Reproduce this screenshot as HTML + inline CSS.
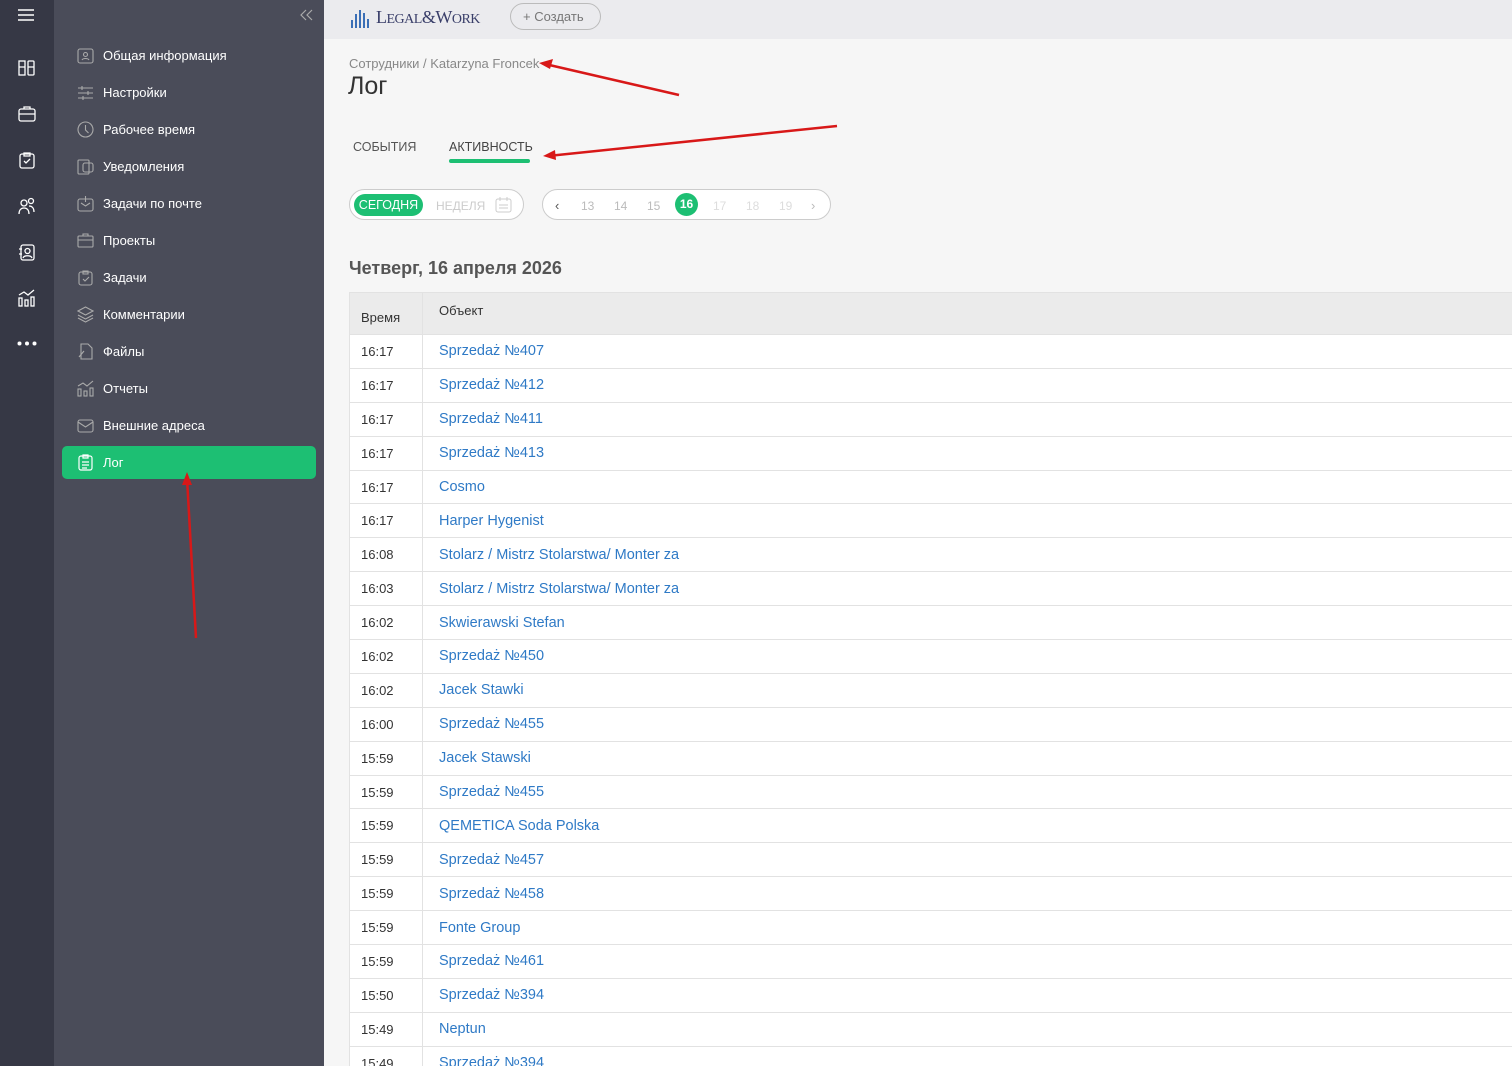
<!DOCTYPE html>
<html><head><meta charset="utf-8"><style>
*{box-sizing:border-box;margin:0;padding:0}
html,body{width:1512px;height:1066px;overflow:hidden}
body{font-family:"Liberation Sans","Noto Sans CJK SC",sans-serif;background:#f6f6f6;position:relative}
.rail{position:absolute;left:0;top:0;width:54px;height:1066px;background:#363845}
.side{position:absolute;left:54px;top:0;width:270px;height:1066px;background:#4a4c59}
.top{position:absolute;left:324px;top:0;right:0;height:39px;background:#ebebee}
.ri{position:absolute;left:17px;width:20px;height:20px}
.item{position:absolute;left:62px;width:254px;height:33px;color:#fff;font-size:13px;display:flex;align-items:center;padding-left:41px}
.item svg{position:absolute;left:15px;top:8px}
.item.act{background:#1dbf73;border-radius:5px}
table{position:absolute;left:349px;top:292px;width:1170px;border-collapse:collapse;background:#fff;font-size:13px}
td,th{border:1px solid #e2e2e2;height:33.9px;text-align:left;font-weight:normal}
th{background:#ebebeb;height:42px;color:#333;font-size:13px}
td:first-child,th:first-child{width:73px;padding-left:11px;color:#333}
th:first-child{padding-top:8px}
td:nth-child(2),th:nth-child(2){padding-left:16px}
td:nth-child(2){color:#2f7ac6;font-size:14.5px}
th:nth-child(2){padding-bottom:6px}
</style></head><body>
<div class="rail">
<svg style="position:absolute;left:18px;top:9px" width="16" height="12"><path d="M0 1h16M0 6h16M0 11h16" stroke="#fff" stroke-width="1.4"/></svg>
<svg class="ri" style="top:58px" viewBox="0 0 20 20" fill="none" stroke="#fff" stroke-width="1.3"><rect x="2" y="3" width="6" height="14"/><rect x="11" y="3" width="6" height="14" rx="1"/><path d="M2 9h6M11 9h6"/></svg>
<svg class="ri" style="top:104px" viewBox="0 0 20 20" fill="none" stroke="#fff" stroke-width="1.3"><rect x="2" y="5" width="16" height="12" rx="2"/><path d="M2 10h16M7 5V3h6v2"/></svg>
<svg class="ri" style="top:150px" viewBox="0 0 20 20" fill="none" stroke="#fff" stroke-width="1.3"><rect x="3" y="4" width="14" height="14" rx="2"/><path d="M7 3h6v3H7zM7 11l2 2 4-4"/></svg>
<svg class="ri" style="top:196px" viewBox="0 0 20 20" fill="none" stroke="#fff" stroke-width="1.3"><circle cx="7" cy="7" r="3"/><circle cx="14" cy="5" r="2.5"/><path d="M2 18c0-4 2-6 5-6s5 2 5 6M12 10c3 0 5 2 5 6"/></svg>
<svg class="ri" style="top:242px" viewBox="0 0 20 20" fill="none" stroke="#fff" stroke-width="1.3"><rect x="4" y="3" width="13" height="15" rx="2"/><circle cx="10.5" cy="9" r="2.5"/><path d="M6 16c1-3 8-3 9 0M2 7h3M2 12h3"/></svg>
<svg class="ri" style="top:288px" viewBox="0 0 20 20" fill="none" stroke="#fff" stroke-width="1.3"><rect x="2" y="10" width="3" height="8"/><rect x="8" y="12" width="3" height="6"/><rect x="14" y="9" width="3" height="9"/><path d="M2 7l5-3 4 3 6-5"/></svg>
<svg style="position:absolute;left:17px;top:341px" width="20" height="5"><circle cx="2.5" cy="2.5" r="2" fill="#fff"/><circle cx="10" cy="2.5" r="2" fill="#fff"/><circle cx="17.5" cy="2.5" r="2" fill="#fff"/></svg>
</div>
<div class="side">
<svg style="position:absolute;left:246px;top:9px" width="14" height="12" fill="none" stroke="#aaa" stroke-width="1.2"><path d="M6 1L1 6l5 5M12 1L7 6l5 5"/></svg>
</div>
<div class="item" style="top:39px"><svg width="17" height="17" fill="none" stroke="#aaa" stroke-width="1.1"><rect x="1" y="2" width="15" height="14" rx="2"/><circle cx="8.5" cy="7.5" r="2"/><path d="M5 13c1-2 6-2 7 0"/></svg>Общая информация</div>
<div class="item" style="top:76px"><svg width="17" height="17" fill="none" stroke="#aaa" stroke-width="1.1"><path d="M1 4h15M1 9h15M1 14h15M5 2v4M11 7v4M6 12v4"/></svg>Настройки</div>
<div class="item" style="top:113px"><svg width="17" height="17" fill="none" stroke="#aaa" stroke-width="1.1"><circle cx="8.5" cy="8.5" r="7.5"/><path d="M8.5 4v5l3 3"/></svg>Рабочее время</div>
<div class="item" style="top:150px"><svg width="17" height="17" fill="none" stroke="#aaa" stroke-width="1.1"><rect x="1" y="2" width="11" height="14" rx="1"/><rect x="6" y="5" width="10" height="9" rx="2"/></svg>Уведомления</div>
<div class="item" style="top:187px"><svg width="17" height="17" fill="none" stroke="#aaa" stroke-width="1.1"><rect x="1" y="4" width="15" height="12" rx="2"/><path d="M4 8l4.5 3L13 8M8.5 1v6"/></svg>Задачи по почте</div>
<div class="item" style="top:224px"><svg width="17" height="17" fill="none" stroke="#aaa" stroke-width="1.1"><rect x="1" y="4" width="15" height="11" rx="1"/><path d="M1 8h15M6 4V2h5v2"/></svg>Проекты</div>
<div class="item" style="top:261px"><svg width="17" height="17" fill="none" stroke="#aaa" stroke-width="1.1"><rect x="2" y="3" width="13" height="13" rx="2"/><path d="M6 2h5v3H6zM6 10l2 2 4-4"/></svg>Задачи</div>
<div class="item" style="top:298px"><svg width="17" height="17" fill="none" stroke="#aaa" stroke-width="1.1"><path d="M8.5 1L16 5l-7.5 4L1 5zM1 9l7.5 4L16 9M1 12l7.5 4 7.5-4"/></svg>Комментарии</div>
<div class="item" style="top:335px"><svg width="17" height="17" fill="none" stroke="#aaa" stroke-width="1.1"><path d="M4 1h7l4 4v11H4z"/><path d="M2 14l5-6"/></svg>Файлы</div>
<div class="item" style="top:372px"><svg width="17" height="17" fill="none" stroke="#aaa" stroke-width="1.1"><rect x="1" y="9" width="3" height="7"/><rect x="7" y="11" width="3" height="5"/><rect x="13" y="8" width="3" height="8"/><path d="M1 6l5-3 4 3 6-5"/></svg>Отчеты</div>
<div class="item" style="top:409px"><svg width="17" height="17" fill="none" stroke="#aaa" stroke-width="1.1"><rect x="1" y="3" width="15" height="12" rx="2"/><path d="M1 5l7.5 5L16 5"/></svg>Внешние адреса</div>
<div class="item act" style="top:446px"><svg width="17" height="17" fill="none" stroke="#fff" stroke-width="1.2"><rect x="2" y="2" width="13" height="14" rx="2"/><path d="M6 1h5v3H6zM5 8h7M5 11h7M5 14h5"/></svg>Лог</div>
<div class="top">
<div style="position:absolute;left:26px;top:6px;display:flex;align-items:flex-end;height:22px">
<svg width="26" height="20"><g stroke="#3b6fb6" stroke-width="2"><path d="M2 20v-8M6 20V6M10 20V2M14 20V5M18 20v-9"/></g></svg>
<span style="font-family:'Liberation Serif',serif;font-size:18px;color:#3a3f6a;letter-spacing:-0.5px">L<span style="font-size:14px">EGAL</span>&amp;W<span style="font-size:14px">ORK</span></span></div>
<div style="position:absolute;left:186px;top:3px;width:91px;height:27px;border:1px solid #bbb;border-radius:14px;font-size:13px;color:#777;line-height:25px;padding-left:12px">+ Создать</div>
</div>
<div style="position:absolute;left:349px;top:56px;font-size:13px;color:#888">Сотрудники / Katarzyna Froncek</div>
<div style="position:absolute;left:348px;top:72px;font-size:25px;color:#333">Лог</div>
<div style="position:absolute;left:353px;top:140px;font-size:12.5px;color:#555">СОБЫТИЯ</div>
<div style="position:absolute;left:449px;top:140px;font-size:12.5px;color:#444">АКТИВНОСТЬ</div>
<div style="position:absolute;left:449px;top:159px;width:81px;height:4px;background:#1dbf73;border-radius:2px"></div>
<div style="position:absolute;left:349px;top:189px;width:175px;height:31px;border:1px solid #ccc;border-radius:16px;background:#fff"></div>
<div style="position:absolute;left:354px;top:194px;width:69px;height:22px;border-radius:11px;background:#1dbf73;color:#fff;font-size:12.5px;line-height:22px;text-align:center">СЕГОДНЯ</div>
<div style="position:absolute;left:436px;top:199px;font-size:12px;color:#ccc">НЕДЕЛЯ</div>
<svg style="position:absolute;left:495px;top:196px" width="17" height="17" fill="none" stroke="#ccc"><rect x="1" y="3" width="15" height="13" rx="2"/><path d="M5 1v4M12 1v4M4 9h9M4 12h9"/></svg>
<div style="position:absolute;left:542px;top:189px;width:289px;height:31px;border:1px solid #ccc;border-radius:16px;background:#fff"></div>
<div style="position:absolute;left:555px;top:198px;font-size:13px;color:#555">‹</div>
<div style="position:absolute;left:581px;top:199px;font-size:12px;color:#bbb">13</div>
<div style="position:absolute;left:614px;top:199px;font-size:12px;color:#bbb">14</div>
<div style="position:absolute;left:647px;top:199px;font-size:12px;color:#bbb">15</div>
<div style="position:absolute;left:675px;top:193px;width:23px;height:23px;border-radius:50%;background:#1dbf73;color:#fff;font-size:12px;line-height:23px;text-align:center;font-weight:bold">16</div>
<div style="position:absolute;left:713px;top:199px;font-size:12px;color:#ddd">17</div>
<div style="position:absolute;left:746px;top:199px;font-size:12px;color:#ddd">18</div>
<div style="position:absolute;left:779px;top:199px;font-size:12px;color:#ddd">19</div>
<div style="position:absolute;left:811px;top:198px;font-size:13px;color:#bbb">›</div>
<div style="position:absolute;left:349px;top:258px;font-size:18px;font-weight:bold;color:#555">Четверг, 16 апреля 2026</div>
<table>
<tr><th>Время</th><th>Объект</th></tr>
<tr><td>16:17</td><td>Sprzedaż №407</td></tr>
<tr><td>16:17</td><td>Sprzedaż №412</td></tr>
<tr><td>16:17</td><td>Sprzedaż №411</td></tr>
<tr><td>16:17</td><td>Sprzedaż №413</td></tr>
<tr><td>16:17</td><td>Cosmo</td></tr>
<tr><td>16:17</td><td>Harper Hygenist</td></tr>
<tr><td>16:08</td><td>Stolarz / Mistrz Stolarstwa/ Monter za</td></tr>
<tr><td>16:03</td><td>Stolarz / Mistrz Stolarstwa/ Monter za</td></tr>
<tr><td>16:02</td><td>Skwierawski Stefan</td></tr>
<tr><td>16:02</td><td>Sprzedaż №450</td></tr>
<tr><td>16:02</td><td>Jacek Stawki</td></tr>
<tr><td>16:00</td><td>Sprzedaż №455</td></tr>
<tr><td>15:59</td><td>Jacek Stawski</td></tr>
<tr><td>15:59</td><td>Sprzedaż №455</td></tr>
<tr><td>15:59</td><td>QEMETICA Soda Polska</td></tr>
<tr><td>15:59</td><td>Sprzedaż №457</td></tr>
<tr><td>15:59</td><td>Sprzedaż №458</td></tr>
<tr><td>15:59</td><td>Fonte Group</td></tr>
<tr><td>15:59</td><td>Sprzedaż №461</td></tr>
<tr><td>15:50</td><td>Sprzedaż №394</td></tr>
<tr><td>15:49</td><td>Neptun</td></tr>
<tr><td>15:49</td><td>Sprzedaż №394</td></tr>
</table>
<svg style="position:absolute;left:0;top:0" width="1512" height="1066" fill="none">
<g stroke="#d81818" stroke-width="2.5">
<path d="M679 95L545 64"/><path d="M837 126L548 156"/><path d="M196 638L187 478"/></g>
<g fill="#d81818"><path d="M539 63l14-4-3 10z"/><path d="M543 156l12-6 1 10z"/><path d="M187 472l-5 13h10z"/></g>
</svg>
</body></html>
